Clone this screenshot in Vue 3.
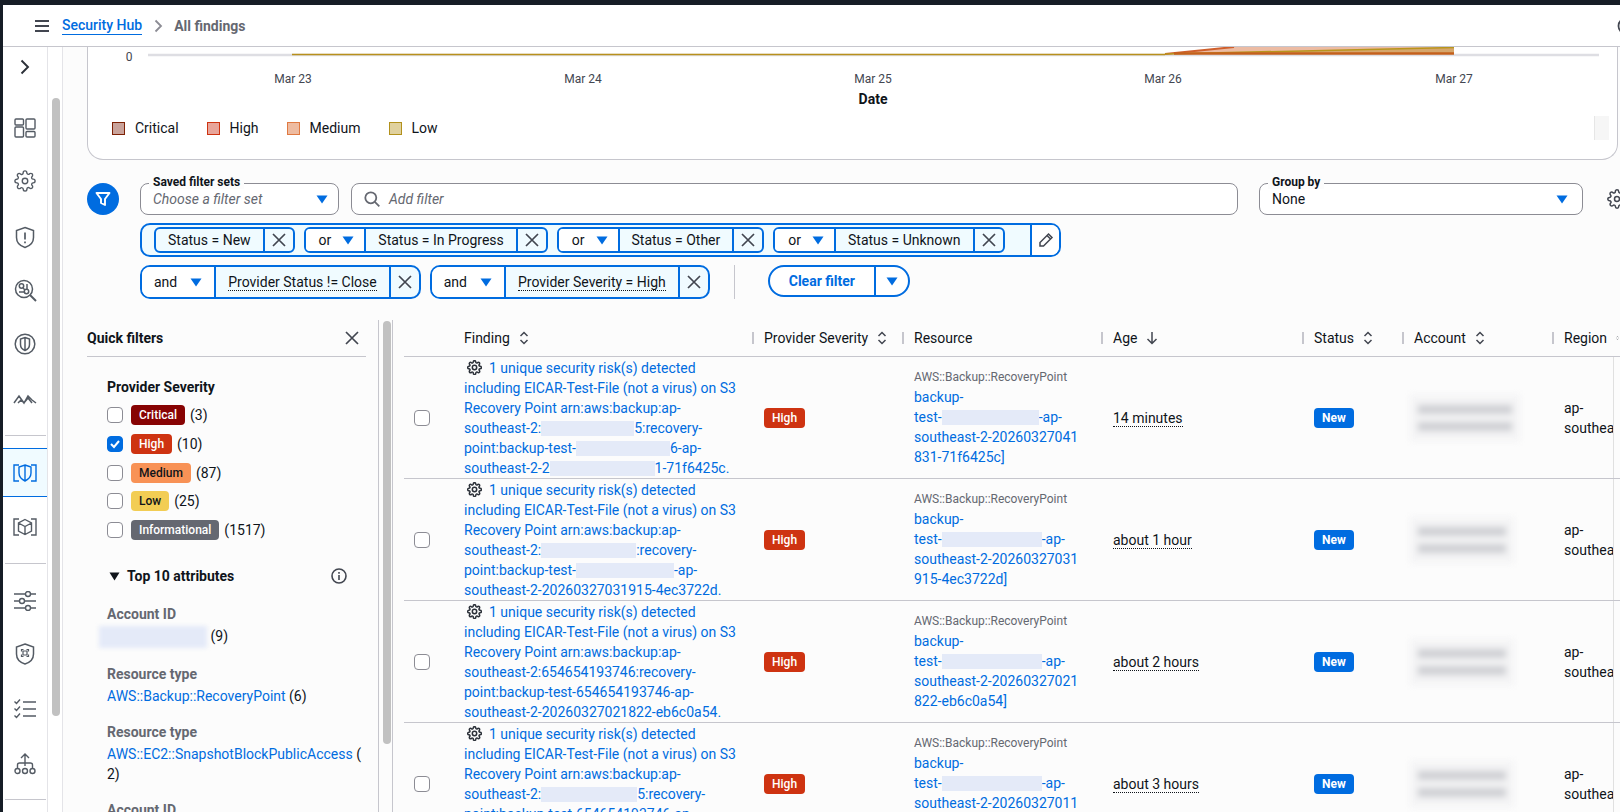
<script setup>
const gear = 'M19.4 15a1.65 1.65 0 0 0 .33 1.82l.06.06a2 2 0 0 1 0 2.83 2 2 0 0 1-2.83 0l-.06-.06a1.65 1.65 0 0 0-1.82-.33 1.65 1.65 0 0 0-1 1.51V21a2 2 0 0 1-2 2 2 2 0 0 1-2-2v-.09A1.65 1.65 0 0 0 9 19.4a1.65 1.65 0 0 0-1.82.33l-.06.06a2 2 0 0 1-2.83 0 2 2 0 0 1 0-2.83l.06-.06a1.65 1.65 0 0 0 .33-1.82 1.65 1.65 0 0 0-1.51-1H3a2 2 0 0 1-2-2 2 2 0 0 1 2-2h.09A1.65 1.65 0 0 0 4.6 9a1.65 1.65 0 0 0-.33-1.82l-.06-.06a2 2 0 0 1 0-2.83 2 2 0 0 1 2.83 0l.06.06a1.65 1.65 0 0 0 1.82.33H9a1.65 1.65 0 0 0 1-1.51V3a2 2 0 0 1 2-2 2 2 0 0 1 2 2v.09a1.65 1.65 0 0 0 1 1.51 1.65 1.65 0 0 0 1.82-.33l.06-.06a2 2 0 0 1 2.83 0 2 2 0 0 1 0 2.83l-.06.06a1.65 1.65 0 0 0-.33 1.82V9a1.65 1.65 0 0 0 1.51 1H21a2 2 0 0 1 2 2 2 2 0 0 1-2 2h-.09a1.65 1.65 0 0 0-1.51 1z'

const legend = [
  { label: 'Critical', cls: 'sq-critical' },
  { label: 'High', cls: 'sq-high' },
  { label: 'Medium', cls: 'sq-medium' },
  { label: 'Low', cls: 'sq-low' },
]
const statusTokens = [
  { label: 'Status = New' },
  { op: 'or', label: 'Status = In Progress' },
  { op: 'or', label: 'Status = Other' },
  { op: 'or', label: 'Status = Unknown' },
]
const providerTokens = [
  { op: 'and', label: 'Provider Status != Close' },
  { op: 'and', label: 'Provider Severity = High' },
]
const severities = [
  { label: 'Critical', count: '(3)', cls: 'b-critical' },
  { label: 'High', count: '(10)', cls: 'b-high', checked: true },
  { label: 'Medium', count: '(87)', cls: 'b-medium' },
  { label: 'Low', count: '(25)', cls: 'b-low' },
  { label: 'Informational', count: '(1517)', cls: 'b-info' },
]
const head = [
  { label: 'Finding', sort: true },
  { label: 'Provider Severity', sort: true },
  { label: 'Resource' },
  { label: 'Age', arrow: true },
  { label: 'Status', sort: true },
  { label: 'Account', sort: true },
  { label: 'Region', sort: true },
]
const intro = 'including EICAR-Test-File (not a virus) on S3'
const intro2 = 'Recovery Point arn:aws:backup:ap-'
const rows = [
  {
    finding: [[intro], [intro2], ['southeast-2:', 93, '5:recovery-'], ['point:backup-test-', 94, '6-ap-'], ['southeast-2-2', 105, '1-71f6425c.']],
    resource: [['backup-'], ['test-', 97, '-ap-'], ['southeast-2-20260327041'], ['831-71f6425c]']],
    age: '14 minutes',
    acc: 110,
  },
  {
    finding: [[intro], [intro2], ['southeast-2:', 95, ':recovery-'], ['point:backup-test-', 98, '-ap-'], ['southeast-2-20260327031915-4ec3722d.']],
    resource: [['backup-'], ['test-', 100, '-ap-'], ['southeast-2-20260327031'], ['915-4ec3722d]']],
    age: 'about 1 hour',
    acc: 104,
  },
  {
    finding: [[intro], [intro2], ['southeast-2:654654193746:recovery-'], ['point:backup-test-654654193746-ap-'], ['southeast-2-20260327021822-eb6c0a54.']],
    resource: [['backup-'], ['test-', 100, '-ap-'], ['southeast-2-20260327021'], ['822-eb6c0a54]']],
    age: 'about 2 hours',
    acc: 104,
  },
  {
    finding: [[intro], [intro2], ['southeast-2:', 96, '5:recovery-'], ['point:backup-test-654654193746-ap-'], ['southeast-2-20260327011']],
    resource: [['backup-'], ['test-', 100, '-ap-'], ['southeast-2-20260327011'], ['']],
    age: 'about 3 hours',
    acc: 104,
  },
]
</script>

<template>
  <div class="app">
    <div class="edge"></div>
    <div class="main">
      <header class="topbar">
        <svg class="burger" width="14" height="12" viewBox="0 0 14 12"><path d="M0 1h14M0 6h14M0 11h14" stroke="#424650" stroke-width="1.8" /></svg>
        <a class="crumb-link">Security Hub</a>
        <svg class="crumb-sep" width="9" height="14" viewBox="0 0 9 14" fill="none"><path d="M1.5 1.5 7 7l-5.5 5.5" stroke="#8c8c94" stroke-width="1.8" /></svg>
        <span class="crumb-current">All findings</span>
        <svg class="top-help" width="18" height="18" viewBox="0 0 18 18" fill="none"><circle cx="9" cy="9" r="7.5" stroke="#424650" stroke-width="1.8" /></svg>
      </header>

      <div class="body">
        <nav class="rail">
          <svg class="r-chev" width="10" height="16" viewBox="0 0 10 16" fill="none"><path d="m1.5 1.5 6.5 6.500-6.500 6.500" stroke="#2b3038" stroke-width="1.9" /></svg>
          <div class="r-item r-dash">
            <svg width="22" height="20" viewBox="0 0 22 20" fill="none" stroke="#545b64" stroke-width="1.4"><rect x="1" y="1" width="8.500" height="6" rx="1" /><rect x="12" y="1" width="9" height="10" rx="1" /><rect x="1" y="9" width="8.500" height="10" rx="1" /><rect x="12" y="13.500" width="9" height="5.500" rx="1" /></svg>
          </div>
          <div class="r-item r-gear">
            <svg width="22" height="22" viewBox="0 0 24 24" fill="none" stroke="#545b64" stroke-width="1.500"><circle cx="12" cy="12" r="3" /><path :d="gear" /></svg>
          </div>
          <div class="r-item r-shield">
            <svg width="20" height="23" viewBox="0 0 20 23" fill="none" stroke="#545b64" stroke-width="1.500"><path d="M10 1.500 18.500 4.500v7c0 5-3.800 8.500-8.500 10-4.700-1.500-8.500-5-8.500-10v-7z" /><path d="M10 6.500v7M10 15.500v1.800" stroke-width="1.700" /></svg>
          </div>
          <div class="r-item r-search">
            <svg width="23" height="23" viewBox="0 0 23 23" fill="none" stroke="#545b64" stroke-width="1.500"><circle cx="10" cy="10" r="8.500" /><path d="m16 16 6 6" stroke-width="2" /><circle cx="7.500" cy="7" r="2.200" /><circle cx="12.500" cy="12.500" r="2.200" /><path d="M9 9l2 2M13 5v5M5 13h5" /></svg>
          </div>
          <div class="r-item r-round">
            <svg width="22" height="22" viewBox="0 0 22 22" fill="none" stroke="#545b64" stroke-width="1.500"><circle cx="11" cy="11" r="9.800" /><path d="M11 4.500 15.500 6v5.500c0 3-2 5-4.500 6-2.500-1-4.500-3-4.500-6V6zM11 4.500v13" /></svg>
          </div>
          <div class="r-item r-mount">
            <svg width="24" height="12" viewBox="0 0 24 12" fill="none" stroke="#545b64" stroke-width="1.500"><path d="m1 10 5-7 5 7 4-7 4 4 4 3M5 10l3-3 3 3 4-5 4 5" /></svg>
          </div>
          <div class="r-div r-d1"></div>
          <div class="r-active">
            <svg width="24" height="18" viewBox="0 0 24 18" fill="none" stroke="#006ce0" stroke-width="1.400"><path d="M6 1H1v16h5M18 1h5v16h-5" /><path d="M12 1 18 3v6c0 4-3 6.500-6 8-3-1.500-6-4-6-8V3zM12 1v16" /></svg>
          </div>
          <div class="r-item r-cube">
            <svg width="24" height="18" viewBox="0 0 24 18" fill="none" stroke="#545b64" stroke-width="1.400"><path d="M6 1H1v16h5M18 1h5v16h-5" /><path d="m12 1.500 6.500 3.500v8L12 16.500 5.500 13V5zM5.500 5 12 8.500 18.500 5M12 8.500v8" /></svg>
          </div>
          <div class="r-div r-d2"></div>
          <div class="r-item r-sliders">
            <svg width="22" height="20" viewBox="0 0 22 20" fill="none" stroke="#545b64" stroke-width="1.400"><path d="M0 3h11M17 3h5M0 10h5M11 10h11M0 17h11M17 17h5" /><circle cx="14" cy="3" r="2.500" /><circle cx="8" cy="10" r="2.500" /><circle cx="14" cy="17" r="2.500" /></svg>
          </div>
          <div class="r-item r-shield2">
            <svg width="20" height="22" viewBox="0 0 20 22" fill="none" stroke="#545b64" stroke-width="1.500"><path d="M10 1 18.500 4v7c0 5-3.800 8.500-8.500 10-4.700-1.500-8.500-5-8.500-10V4z" /><path d="M6.500 8.500v-2h2M11.500 6.500h2v2M13.500 11.500v2h-2M8.500 13.500h-2v-2M8 8h4v4H8z" stroke-width="1.200" /></svg>
          </div>
          <div class="r-item r-list">
            <svg width="22" height="20" viewBox="0 0 22 20" fill="none" stroke="#545b64" stroke-width="1.400"><path d="m0.500 2.500 2 2 3.500-4M0.500 9.500l2 2 3.500-4M0.500 16.500l2 2 3.500-4M9 3h13M9 10h13M9 17h13" /></svg>
          </div>
          <div class="r-item r-tree">
            <svg width="22" height="22" viewBox="0 0 22 22" fill="none" stroke="#545b64" stroke-width="1.400"><path d="M11 1v12M7 5l4-4 4 4M3.500 15.500V12q0-2 2-2h11q2 0 2 2v3.500" /><circle cx="3.500" cy="18" r="2.500" /><circle cx="11" cy="18" r="2.500" /><circle cx="18.500" cy="18" r="2.500" /></svg>
          </div>
          <div class="r-div r-d3"></div>
        </nav>

        <div class="page-track"><div class="page-thumb"></div></div>

        <main class="content">
          <section class="card">
            <svg class="chart" width="1530" height="69" viewBox="88 47 1530 69">
              <path d="M149 55H1600" stroke="#dedee3" stroke-width="2.500" />
              <path d="M293 54.500H1166" stroke="#b8901c" stroke-width="1.500" />
              <path d="M1166 54 1235 47H1455V54z" fill="#ecbba3" />
              <path d="M1166 54 1455 47.500V54z" fill="#d6a66b" />
              <path d="M1166 54 1235 47" stroke="#cf5f2c" stroke-width="2" />
              <path d="M1166 54 1455 47.500" stroke="#b8951c" stroke-width="1.500" />
              <path d="M1175 53.500H1455" stroke="#c4601c" stroke-width="2.500" />
              <text class="ax" x="130" y="61" text-anchor="middle">0</text>
              <text class="ax" x="294" y="83" text-anchor="middle">Mar 23</text>
              <text class="ax" x="584" y="83" text-anchor="middle">Mar 24</text>
              <text class="ax" x="874" y="83" text-anchor="middle">Mar 25</text>
              <text class="ax" x="1164" y="83" text-anchor="middle">Mar 26</text>
              <text class="ax" x="1455" y="83" text-anchor="middle">Mar 27</text>
              <text class="ax-title" x="874" y="104" text-anchor="middle">Date</text>
            </svg>
            <div class="legend">
              <div v-for="l in legend" :key="l.label" class="leg-item">
                <span class="sq" :class="l.cls"></span>{{ l.label }}
              </div>
              <div class="leg-pager"></div>
            </div>
          </section>

          <section class="filterbar">
            <div class="funnel">
              <svg width="16" height="16" viewBox="0 0 16 16" fill="none" stroke="#fff" stroke-width="1.900"><path d="M1.500 2h13L10 8v6l-4-2V8z" stroke-linejoin="round" /></svg>
            </div>
            <div class="filter-col">
              <div class="filter-top">
                <div class="field f-saved">
                  <span class="f-label">Saved filter sets</span>
                  <span class="placeholder">Choose a filter set</span>
                  <svg class="caret" width="12" height="9" viewBox="0 0 12 9"><path d="M0.500 0.500h11L6 8.500z" fill="#006ce0" /></svg>
                </div>
                <div class="field f-add">
                  <svg width="16" height="16" viewBox="0 0 16 16" fill="none" stroke="#656871" stroke-width="1.800"><circle cx="6.800" cy="6.800" r="5.500" /><path d="m10.800 10.800 4.500 4.500" /></svg>
                  <span class="placeholder">Add filter</span>
                </div>
                <div class="field f-group">
                  <span class="f-label">Group by</span>
                  <span class="f-val">None</span>
                  <svg class="caret" width="12" height="9" viewBox="0 0 12 9"><path d="M0.500 0.500h11L6 8.500z" fill="#006ce0" /></svg>
                </div>
                <svg class="cfg" width="20" height="20" viewBox="0 0 24 24" fill="none" stroke="#424650" stroke-width="1.800"><circle cx="12" cy="12" r="3" /><path :d="gear" /></svg>
              </div>

              <div class="tok-row">
                <div class="group">
                  <div class="group-inner">
                    <div v-for="t in statusTokens" :key="t.label" class="tok">
                      <span v-if="t.op" class="tok-op">{{ t.op }}<svg width="12" height="9" viewBox="0 0 12 9"><path d="M0.500 0.500h11L6 8.500z" fill="#006ce0" /></svg></span>
                      <span class="tok-label">{{ t.label }}</span>
                      <span class="tok-x"><svg width="14" height="14" viewBox="0 0 14 14"><path d="m1 1 12 12M13 1 1 13" stroke="#424650" stroke-width="1.700" /></svg></span>
                    </div>
                  </div>
                  <span class="pencil"><svg width="16" height="16" viewBox="0 0 16 16" fill="none" stroke="#424650" stroke-width="1.500"><path d="M10.500 2 14 5.500 5.500 14H2v-3.500zM9 3.500 12.500 7" /></svg></span>
                </div>
              </div>

              <div class="tok-row">
                <div v-for="t in providerTokens" :key="t.label" class="tok tok-big">
                  <span class="tok-op">{{ t.op }}<svg width="12" height="9" viewBox="0 0 12 9"><path d="M0.500 0.500h11L6 8.500z" fill="#006ce0" /></svg></span>
                  <span class="tok-label"><span class="dotted">{{ t.label }}</span></span>
                  <span class="tok-x"><svg width="14" height="14" viewBox="0 0 14 14"><path d="m1 1 12 12M13 1 1 13" stroke="#424650" stroke-width="1.700" /></svg></span>
                </div>
                <span class="vsep"></span>
                <div class="clear-btn">
                  <span class="clear-main">Clear filter</span>
                  <span class="clear-drop"><svg width="12" height="9" viewBox="0 0 12 9"><path d="M0.500 0.500h11L6 8.500z" fill="#006ce0" /></svg></span>
                </div>
              </div>
            </div>
          </section>

          <section class="split">
            <aside class="quick">
              <div class="q-head">
                <span>Quick filters</span>
                <svg width="14" height="14" viewBox="0 0 14 14"><path d="m1 1 12 12M13 1 1 13" stroke="#424650" stroke-width="1.700" /></svg>
              </div>
              <div class="q-body">
                <div class="q-title">Provider Severity</div>
                <div class="sev-list">
                  <div v-for="s in severities" :key="s.label" class="sev">
                    <span class="cb" :class="{ 'cb-on': s.checked }">
                      <svg v-if="s.checked" width="12" height="12" viewBox="0 0 12 12" fill="none"><path d="m2 6 3 3 5-6" stroke="#fff" stroke-width="2" /></svg>
                    </span>
                    <span class="badge" :class="s.cls">{{ s.label }}</span>
                    <span>{{ s.count }}</span>
                  </div>
                </div>
                <div class="top10">
                  <svg width="11" height="9" viewBox="0 0 11 9"><path d="M0.500 0.500h10L5.500 8.500z" fill="#0f141a" /></svg>
                  <span class="top10-t">Top 10 attributes</span>
                  <svg class="info" width="16" height="16" viewBox="0 0 16 16" fill="none" stroke="#424650" stroke-width="1.600"><circle cx="8" cy="8" r="7" /><path d="M8 7v5M8 4v1.800" /></svg>
                </div>
                <div class="attr-label first">Account ID</div>
                <div class="attr-val"><span class="blur-acc"></span> (9)</div>
                <div class="attr-label">Resource type</div>
                <div class="attr-val"><a class="link">AWS::Backup::RecoveryPoint</a> (6)</div>
                <div class="attr-label">Resource type</div>
                <div class="attr-val"><a class="link">AWS::EC2::SnapshotBlockPublicAccess</a> (<br />2)</div>
                <div class="attr-label">Account ID</div>
              </div>
            </aside>
            <div class="q-track"><div class="q-thumb"></div></div>

            <div class="table">
              <div class="t-row t-head">
                <div></div>
                <div v-for="(h, i) in head" :key="h.label" class="th" :class="{ 'th-rz': true, 'th-first': i === 0 }">
                  <span>{{ h.label }}</span>
                  <svg v-if="h.sort" width="10" height="14" viewBox="0 0 10 14" fill="none" stroke="#424650" stroke-width="1.500"><path d="M1.500 5 5 1.500 8.500 5M1.500 9 5 12.500 8.500 9" /></svg>
                  <svg v-if="h.arrow" width="12" height="14" viewBox="0 0 12 14" fill="none" stroke="#424650" stroke-width="1.500"><path d="M6 1v11.500M1.500 8 6 12.500 10.500 8" /></svg>
                </div>
              </div>
              <div v-for="(r, ri) in rows" :key="ri" class="t-row t-body">
                <div><span class="cb cb-row"></span></div>
                <div class="finding">
                  <div class="line">
                    <svg class="f-gear" width="15" height="15" viewBox="0 0 24 24" fill="none" stroke="#2b3038" stroke-width="2.400"><circle cx="12" cy="12" r="3.500" /><path :d="gear" /></svg>1 unique security risk(s) detected
                  </div>
                  <div v-for="(ln, li) in r.finding" :key="li" class="line">
                    <template v-for="(seg, si) in ln" :key="si"><span v-if="typeof seg === 'number'" class="redact" :style="{ width: seg + 'px' }"></span><template v-else>{{ seg }}</template></template>
                  </div>
                </div>
                <div><span class="badge b-high">High</span></div>
                <div class="res">
                  <div class="res-type">AWS::Backup::RecoveryPoint</div>
                  <div v-for="(ln, li) in r.resource" :key="li" class="line">
                    <template v-for="(seg, si) in ln" :key="si"><span v-if="typeof seg === 'number'" class="redact" :style="{ width: seg + 'px' }"></span><template v-else>{{ seg }}</template></template>
                  </div>
                </div>
                <div><span class="dotted age">{{ r.age }}</span></div>
                <div><span class="badge b-new">New</span></div>
                <div class="acc-cell"><div class="acc-blur" :style="{ width: r.acc + 'px' }"><span></span><span></span></div></div>
                <div class="region">ap-<br />southeast-2</div>
              </div>
            </div>
          </section>
        </main>
      </div>
    </div>
  </div>
</template>

<style>
html, body { margin: 0; padding: 0; background: #fff; }
</style>

<style scoped>
.app {
  width: 1620px; height: 812px; overflow: hidden; display: flex;
  font-family: Roboto, "Liberation Sans", sans-serif; font-size: 14px; line-height: 20px; color: #0f141a;
  border-top: 5px solid #161d26; box-sizing: border-box; background: #fff;
}
.edge { width: 3px; flex: none; background: #161d26; }
.main { flex: 1; min-width: 0; display: flex; flex-direction: column; }
.topbar {
  height: 42px; flex: none; box-sizing: border-box; display: flex; align-items: center;
  padding-left: 32px; border-bottom: 1px solid #c6c6cd; background: #fff; overflow: hidden;
}
.burger { margin-right: 13px; }
.crumb-link { color: #006ce0; border-bottom: 1px solid #006ce0; line-height: 17px; font-weight: 500; }
.crumb-sep { margin: 0 11px 0 12px; }
.crumb-current { color: #656871; font-weight: 700; }
.top-help { margin-left: auto; margin-right: -15px; }

.body { flex: 1; min-height: 0; display: flex; }
.rail {
  width: 45px; flex: none; box-sizing: border-box; border-right: 1px solid #e4e4e8; background: #fff;
  display: flex; flex-direction: column; align-items: center; position: relative;
}
.r-chev { margin-top: 12px; }
.r-item { display: flex; justify-content: center; align-items: center; height: 24px; }
.r-dash { margin-top: 41px; }
.r-gear { margin-top: 29px; }
.r-shield { margin-top: 32px; }
.r-search { margin-top: 29px; }
.r-round { margin-top: 30px; }
.r-mount { margin-top: 31px; }
.r-div { height: 1px; width: 41px; background: #c6c6cd; }
.r-d1 { margin-top: 24px; }
.r-active {
  margin-top: 12px; align-self: stretch; height: 49px; box-sizing: border-box; background: #f0fbff;
  border-top: 1px solid #006ce0; border-bottom: 1px solid #006ce0; display: flex; align-items: center; justify-content: center;
}
.r-cube { margin-top: 18px; }
.r-d2 { margin-top: 24px; }
.r-sliders { margin-top: 25px; }
.r-shield2 { margin-top: 29px; }
.r-list { margin-top: 31px; }
.r-tree { margin-top: 31px; }
.r-d3 { margin-top: 23px; }

.page-track { width: 15px; flex: none; box-sizing: border-box; border-right: 1px solid #e4e4e8; background: #fff; padding-left: 4px; }
.page-thumb { width: 8px; height: 618px; margin-top: 51px; border-radius: 4px; background: #c1c1c1; }

.content { flex: 1; min-width: 0; background: #fcfcfc; overflow: hidden; }
.card {
  margin: 0 2px 0 24px; height: 113px; box-sizing: border-box; background: #fff;
  border: 1px solid #c6c6cd; border-top: 0; border-radius: 0 0 16px 16px;
}
.chart { display: block; margin-left: -1px; }
.ax { font: 12px Roboto, sans-serif; fill: #424650; }
.ax-title { font: 700 14px Roboto, sans-serif; fill: #0f141a; }
.legend { display: flex; align-items: center; height: 24px; padding-left: 24px; }
.leg-item { display: flex; align-items: center; gap: 10px; margin-right: 28px; }
.sq { width: 11px; height: 11px; border: 1px solid; display: block; }
.sq-critical { background: #c9a39b; border-color: #7d2105; }
.sq-high { background: #e8a59a; border-color: #ce3311; }
.sq-medium { background: #eebba0; border-color: #e07941; }
.sq-low { background: #e0d19e; border-color: #b2911c; }
.leg-pager { margin-left: auto; margin-right: 8px; width: 14px; height: 24px; background: #f6f6f6; border-left: 1px solid #e6e6e6; }

.filterbar { display: flex; margin-top: 23px; padding-left: 24px; }
.funnel { width: 32px; height: 32px; flex: none; border-radius: 50%; background: #006ce0; display: flex; align-items: center; justify-content: center; margin-right: 21px; }
.filter-col { flex: none; width: 1490px; }
.filter-top { display: flex; align-items: center; }
.field {
  height: 32px; box-sizing: border-box; border: 1px solid #8c8c94; border-radius: 8px; background: #fff;
  display: flex; align-items: center; position: relative; flex: none;
}
.f-saved { width: 199px; padding: 0 10px 0 12px; justify-content: space-between; margin-right: 12px; }
.f-add { width: 887px; padding-left: 12px; gap: 9px; margin-right: 21px; }
.f-group { width: 324px; padding: 0 14px 0 12px; justify-content: space-between; }
.f-label { position: absolute; top: -9px; left: 8px; padding: 0 4px; background: #fcfcfc; font-size: 12px; line-height: 14px; font-weight: 700; }
.placeholder { font-style: italic; color: #656871; }
.cfg { flex: none; margin-left: 24px; }

.tok-row { display: flex; align-items: stretch; margin-top: 8px; gap: 9px; }
.group {
  width: 921px; height: 34px; box-sizing: border-box; border: 2px solid #006ce0; border-radius: 10px; background: #f0fbff;
  display: flex; align-items: center; justify-content: space-between;
}
.group-inner { display: flex; gap: 9px; padding-left: 12px; }
.pencil { width: 29px; align-self: stretch; box-sizing: border-box; border-left: 2px solid #006ce0; background: #fff; border-radius: 0 8px 8px 0; display: flex; align-items: center; justify-content: center; }
.tok {
  height: 26px; box-sizing: border-box; border: 2px solid #006ce0; border-radius: 6px; background: #f0fbff;
  display: flex; align-items: stretch; overflow: hidden;
}
.tok > span { display: flex; align-items: center; }
.tok-op { background: #fff; padding: 0 10px 0 13px; gap: 11px; border-right: 2px solid #006ce0; }
.tok-label { padding: 0 12px; border-right: 2px solid #006ce0; white-space: nowrap; }
.tok-x { width: 28px; justify-content: center; }
.tok-big { height: 34px; border-radius: 10px; }
.tok-big .tok-label { padding: 0 12px; }
.tok-big .tok-op { padding: 0 12px 0 12px; gap: 13px; }
.dotted { border-bottom: 1px dotted #0f141a; line-height: 16px; }
.vsep { width: 1px; background: #c6c6cd; margin: 0 24px 0 15px; }
.clear-btn { height: 32px; box-sizing: border-box; border: 2px solid #006ce0; border-radius: 16px; background: #fff; display: flex; color: #006ce0; font-weight: 700; }
.clear-main { display: flex; align-items: center; padding: 0 19px; border-right: 2px solid #006ce0; }
.clear-drop { display: flex; align-items: center; justify-content: center; width: 32px; }

.split { display: flex; margin-top: 21px; height: 520px; }
.quick { width: 316px; flex: none; box-sizing: border-box; padding-left: 24px; border-right: 1px solid #c6c6cd; overflow: hidden; }
.q-head {
  width: 279px; height: 37px; box-sizing: border-box; display: flex; align-items: center; justify-content: space-between;
  padding-right: 7px; border-bottom: 1px solid #c6c6cd; font-weight: 700;
}
.q-body { width: 240px; padding: 20px 0 0 20px; }
.q-title { font-weight: 700; }
.sev-list { margin-top: 8px; display: flex; flex-direction: column; gap: 8.750px; }
.sev { display: flex; align-items: center; height: 20px; }
.cb { width: 16px; height: 16px; flex: none; box-sizing: border-box; border: 1px solid #8c8c94; border-radius: 4px; background: #fff; display: flex; align-items: center; justify-content: center; }
.cb-on { background: #006ce0; border-color: #006ce0; }
.sev .cb { margin-right: 8px; }
.badge { height: 20px; display: inline-flex; align-items: center; padding: 0 8px; border-radius: 4px; font-size: 12px; font-weight: 500; color: #fff; }
.sev .badge { margin-right: 5px; }
.b-critical { background: #870303; }
.b-high { background: #ce3311; }
.b-medium { background: #f89256; color: #0f141a; }
.b-low { background: #f2cd54; color: #0f141a; }
.b-info { background: #656871; }
.b-new { background: #006ce0; font-weight: 700; }
.top10 { display: flex; align-items: center; margin-top: 26px; padding-left: 2px; }
.top10-t { font-weight: 700; margin-left: 7px; }
.info { margin-left: auto; }
.attr-label { margin-top: 16px; color: #656871; font-weight: 700; }
.attr-label.first { margin-top: 18px; }
.attr-val { margin-top: 2px; white-space: nowrap; }
.link { color: #006ce0; }
.blur-acc { display: inline-block; width: 108px; height: 22px; margin-left: -8px; background: #e4eaf8; filter: blur(2px); vertical-align: middle; }

.q-track { width: 14px; flex: none; box-sizing: border-box; padding-left: 4px; border-right: 1px solid #c6c6cd; }
.q-thumb { width: 8px; height: 423px; margin-top: 1px; border-radius: 4px; background: #c1c1c1; }

.table { margin-left: 11px; flex: 1; min-width: 0; overflow: hidden; }
.t-row { display: grid; grid-template-columns: 60px 300px 150px 199px 201px 100px 150px 55px; align-items: center; border-bottom: 1px solid #c6c6cd; }
.t-head { height: 37px; box-sizing: border-box; }
.t-body { height: 122px; box-sizing: border-box; }
.th { display: flex; align-items: center; gap: 9px; position: relative; white-space: nowrap; }
.th-rz::before { content: ""; position: absolute; left: -12px; top: 4px; width: 2px; height: 12px; background: #c6c6cd; }
.th-first::before { display: none; }
.cb-row { margin-left: 10px; }
.finding, .res { color: #006ce0; }
.line { height: 20px; white-space: nowrap; }
.f-gear { vertical-align: -2px; margin: 0 7px 0 3px; }
.redact { display: inline-block; height: 15px; background: #e4eaf8; vertical-align: -3px; filter: blur(0.6px); }
.res-type { font-size: 12px; line-height: 19px; color: #656871; }
.age { display: inline-block; }
.acc-cell { padding-left: 0; margin-left: -4px; }
.acc-blur { height: 46px; background: #f4f4f5; filter: blur(3px); display: flex; flex-direction: column; justify-content: center; gap: 8px; padding: 0 8px; box-sizing: border-box; }
.acc-blur span { height: 9px; background: #cfd0d4; display: block; }
.region { width: 50px; align-self: stretch; box-sizing: border-box; border-right: 1px solid #e0e0e0; overflow: hidden; white-space: nowrap; display: flex; flex-direction: column; justify-content: center; }
</style>
